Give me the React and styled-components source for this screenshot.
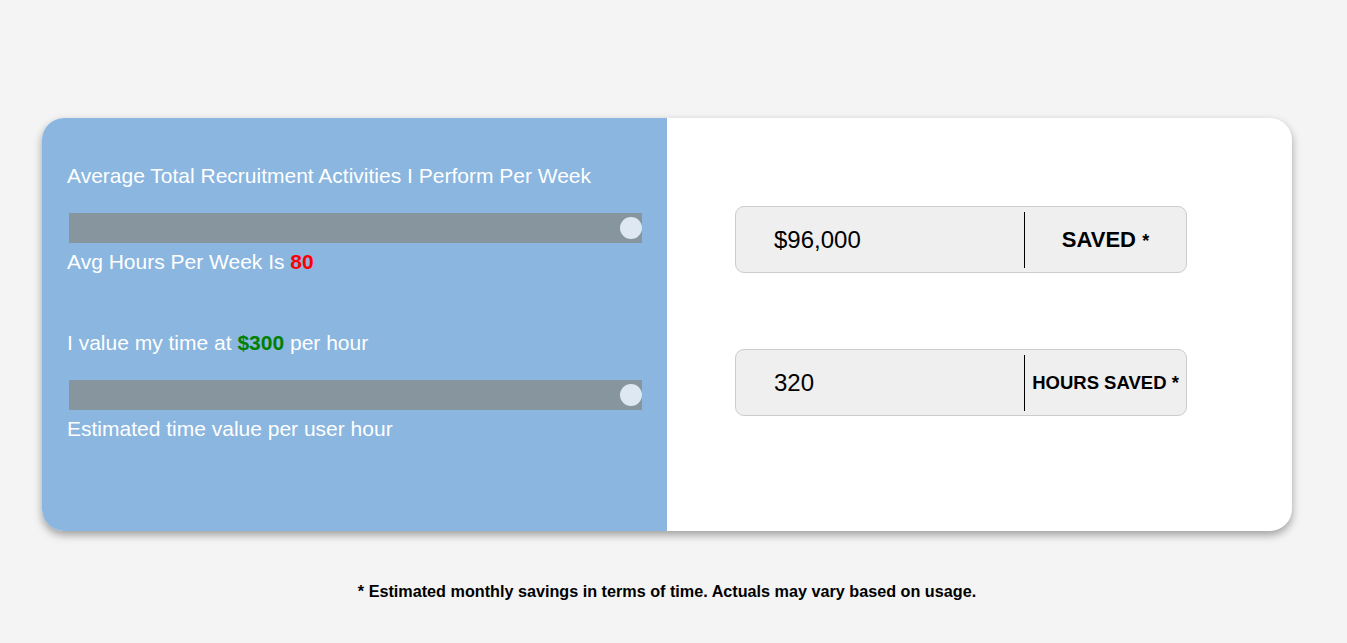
import React, { useState } from 'react'
import styled, { createGlobalStyle } from 'styled-components'

const GlobalStyle = createGlobalStyle`
  html, body {
    margin: 0;
    padding: 0;
    background: #f4f4f4;
    font-family: "Liberation Sans", Arial, sans-serif;
  }
`

const Page = styled.div`
  padding: 118px 55px 0 42px;
`

const Card = styled.div`
  display: grid;
  grid-template-columns: 1fr 1fr;
  width: 1250px;
  height: 413px;
  border-radius: 22px;
  overflow: hidden;
  background: #fff;
  box-shadow: 0 4px 8px rgba(0, 0, 0, 0.35);
`

const LeftPanel = styled.div`
  background: #8ab6df;
  padding: 46px 25px 0 25px;
  color: #fff;
`

const RightPanel = styled.div`
  display: flex;
  flex-direction: column;
  gap: 76px;
  padding: 88px 105px 0 68px;
`

const Label = styled.div`
  font-size: 21px;
  line-height: 24px;
  margin-top: ${p => p.$top || 0}px;
`

const Highlight = styled.b`
  color: ${p => p.$color};
`

const Range = styled.input`
  display: block;
  -webkit-appearance: none;
  appearance: none;
  width: 573px;
  height: 30px;
  margin: ${p => p.$top}px 0 7px 2px;
  background: #87959f;
  outline: none;

  &::-webkit-slider-thumb {
    -webkit-appearance: none;
    width: 22px;
    height: 22px;
    border-radius: 50%;
    background: #dde8f3;
    cursor: pointer;
  }
`

const ResultBox = styled.div`
  display: flex;
  align-items: center;
  height: 67px;
  box-sizing: border-box;
  border: 1px solid #cccccc;
  border-radius: 9px;
  background: #efefef;
`

const Value = styled.div`
  flex: 0 0 288px;
  box-sizing: border-box;
  padding-left: 38px;
  font-size: 24px;
  color: #000;
`

const Divider = styled.div`
  width: 1px;
  height: 56px;
  background: #000;
`

const Caption = styled.div`
  flex: 1;
  text-align: center;
  font-weight: bold;
  font-size: ${p => p.$size}px;
  color: #000;
  white-space: nowrap;
`

const Star = styled.span`
  font-size: 18px;
`

const Footnote = styled.p`
  width: 1250px;
  margin: 51px 0 0;
  text-align: center;
  font-size: 16.2px;
  font-weight: bold;
  color: #000;
`

export default function App() {
  const [hours, setHours] = useState(80)
  const [rate, setRate] = useState(300)
  const saved = hours * 4 * rate

  return (
    <>
      <GlobalStyle />
      <Page>
        <Card>
          <LeftPanel>
            <Label>Average Total Recruitment Activities I Perform Per Week</Label>
            <Range
              type="range"
              min="0"
              max="80"
              value={hours}
              $top={25}
              onChange={e => setHours(Number(e.target.value))}
            />
            <Label>
              Avg Hours Per Week Is <Highlight $color="#ff0000">{hours}</Highlight>
            </Label>
            <Label $top={57}>
              I value my time at <Highlight $color="#008000">${rate}</Highlight> per hour
            </Label>
            <Range
              type="range"
              min="0"
              max="300"
              value={rate}
              $top={25}
              onChange={e => setRate(Number(e.target.value))}
            />
            <Label>Estimated time value per user hour</Label>
          </LeftPanel>
          <RightPanel>
            <ResultBox>
              <Value>${saved.toLocaleString('en-US')}</Value>
              <Divider />
              <Caption $size={22}>
                SAVED <Star>*</Star>
              </Caption>
            </ResultBox>
            <ResultBox>
              <Value>{hours * 4}</Value>
              <Divider />
              <Caption $size={18.5}>HOURS SAVED *</Caption>
            </ResultBox>
          </RightPanel>
        </Card>
        <Footnote>* Estimated monthly savings in terms of time. Actuals may vary based on usage.</Footnote>
      </Page>
    </>
  )
}
